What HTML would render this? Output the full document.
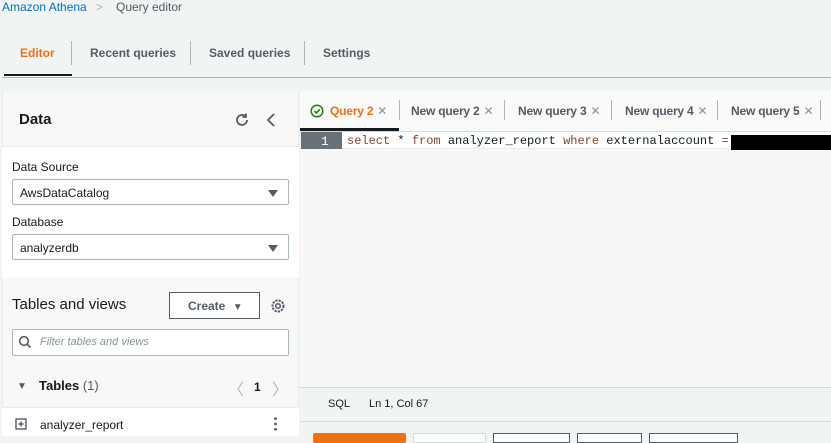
<!DOCTYPE html>
<html><head><style>
*{box-sizing:border-box;margin:0;padding:0}
body{width:831px;height:436px;overflow:hidden;background:#f2f3f3;font-family:"Liberation Sans",sans-serif;position:relative;color:#16191f}
.a{position:absolute}
.t{font-size:12px;font-weight:bold;color:#545b64}
.sel{background:#fff;border:1px solid #aab7b8;border-radius:2px;height:26px;font-size:12px;padding:6px 7px;color:#16191f}
.caret{position:absolute;right:10px;top:10px;width:0;height:0;border-left:5px solid transparent;border-right:5px solid transparent;border-top:7px solid #545b64}
.qt{position:absolute;top:104px;font-size:12px;font-weight:bold;color:#545b64;letter-spacing:-0.2px}
.x{color:#879596;font-weight:normal;margin-left:4px}
.sep{position:absolute;top:100px;width:1px;height:20px;background:#aab7b8}
.mono{font-family:"Liberation Mono",monospace;font-size:12px}
</style></head><body>
<div class="a" style="left:2px;top:0;font-size:12px;color:#0073bb">Amazon Athena</div>
<div class="a" style="left:96px;top:0;font-size:12px;color:#aab7b8">&gt;</div>
<div class="a" style="left:116px;top:0;font-size:12px;color:#545b64">Query editor</div>

<div class="a t" style="left:20px;top:46px;color:#ec7211">Editor</div>
<div class="a" style="left:71px;top:41px;width:1px;height:24px;background:#aab7b8"></div>
<div class="a t" style="left:90px;top:46px">Recent queries</div>
<div class="a" style="left:190px;top:41px;width:1px;height:24px;background:#aab7b8"></div>
<div class="a t" style="left:209px;top:46px">Saved queries</div>
<div class="a" style="left:304px;top:41px;width:1px;height:24px;background:#aab7b8"></div>
<div class="a t" style="left:323px;top:46px">Settings</div>
<div class="a" style="left:4px;top:74px;width:68px;height:2px;background:#16191f"></div>
<div class="a" style="left:2px;top:77px;width:829px;height:1px;background:#aab7b8"></div>

<!-- left panel -->
<div class="a" style="left:2px;top:91px;width:297px;height:345px;background:#f8f8f8;border:1px solid #eaeded;border-top:none"></div>
<div class="a" style="left:19px;top:111px;font-size:15px;font-weight:bold">Data</div>
<svg class="a" style="left:233px;top:111px" width="18" height="18" viewBox="0 0 18 18"><path d="M14 9a5 5 0 1 1-1.5-3.6M13 2.5v3.5h-3.5" fill="none" stroke="#545b64" stroke-width="1.8"/></svg>
<svg class="a" style="left:264px;top:111px" width="14" height="18" viewBox="0 0 14 18"><path d="M10 3l-6 6 6 6" fill="none" stroke="#545b64" stroke-width="1.8"/></svg>
<div class="a" style="left:2px;top:146px;width:297px;height:132px;background:#fff;border-top:1px solid #eaeded"></div>
<div class="a" style="left:12px;top:160px;font-size:12px">Data Source</div>
<div class="a sel" style="left:12px;top:179px;width:277px">AwsDataCatalog<span class="caret"></span></div>
<div class="a" style="left:12px;top:215px;font-size:12px">Database</div>
<div class="a sel" style="left:12px;top:234px;width:277px">analyzerdb<span class="caret"></span></div>

<div class="a" style="left:12px;top:296px;font-size:15px">Tables and views</div>
<div class="a" style="left:169px;top:292px;width:91px;height:27px;border:1px solid #545b64;background:#fff;font-size:12px;font-weight:bold;color:#545b64;padding:6px 0 0 18px">Create <span style="font-size:10px;margin-left:4px">▼</span></div>
<svg class="a" style="left:270px;top:298px" width="16" height="16" viewBox="0 0 16 16"><circle cx="8" cy="8" r="2.3" fill="none" stroke="#545b64" stroke-width="1.5"/><circle cx="8" cy="8" r="5.5" fill="none" stroke="#545b64" stroke-width="2" stroke-dasharray="2.2 1.1"/></svg>
<div class="a" style="left:12px;top:329px;width:277px;height:27px;border:1px solid #aab7b8;background:#fff;border-radius:2px"></div>
<svg class="a" style="left:18px;top:335px" width="14" height="14" viewBox="0 0 14 14"><circle cx="6" cy="6" r="4.3" fill="none" stroke="#545b64" stroke-width="1.6"/><path d="M9 9l3.5 3.5" stroke="#545b64" stroke-width="1.6"/></svg>
<div class="a" style="left:40px;top:336px;font-size:11px;font-style:italic;color:#879596">Filter tables and views</div>
<div class="a" style="left:17px;top:381px;font-size:10px;color:#545b64">▼</div>
<div class="a" style="left:39px;top:378px;font-size:13px;font-weight:bold">Tables <span style="font-weight:normal;color:#545b64">(1)</span></div>
<div class="a" style="left:228px;top:376px;font-size:16px;color:#aab7b8">〈</div>
<div class="a" style="left:254px;top:380px;font-size:12px;font-weight:bold">1</div>
<div class="a" style="left:272px;top:376px;font-size:16px;color:#aab7b8">〉</div>
<div class="a" style="left:2px;top:407px;width:297px;height:29px;background:#fff;border-top:1px solid #eaeded"></div>
<svg class="a" style="left:15px;top:418px" width="12" height="12" viewBox="0 0 12 12"><rect x="1" y="1" width="10" height="10" fill="none" stroke="#545b64" stroke-width="1.4"/><path d="M6 3.5v5M3.5 6h5" stroke="#545b64" stroke-width="1.4"/></svg>
<div class="a" style="left:40px;top:418px;font-size:12px">analyzer_report</div>
<div class="a" style="left:274px;top:416px;width:3px;height:16px;background:radial-gradient(circle,#545b64 1.3px,transparent 1.5px) 0 0/3px 5.3px"></div>

<!-- editor -->
<div class="a" style="left:300px;top:91px;width:531px;height:40px;background:#fafafa"></div>
<svg class="a" style="left:310px;top:104px" width="14" height="14" viewBox="0 0 14 14"><circle cx="7" cy="7" r="5.8" fill="none" stroke="#1d8102" stroke-width="1.5"/><path d="M4.3 7l2 2 3.5-3.7" fill="none" stroke="#1d8102" stroke-width="1.5"/></svg>
<div class="qt" style="left:330px;color:#ec7211">Query 2<span class="x">✕</span></div>
<div class="sep" style="left:399px"></div>
<div class="qt" style="left:411px">New query 2<span class="x">✕</span></div>
<div class="sep" style="left:504px"></div>
<div class="qt" style="left:518px">New query 3<span class="x">✕</span></div>
<div class="sep" style="left:611px"></div>
<div class="qt" style="left:625px">New query 4<span class="x">✕</span></div>
<div class="sep" style="left:717px"></div>
<div class="qt" style="left:731px">New query 5<span class="x">✕</span></div>
<div class="sep" style="left:820px"></div>
<div class="a" style="left:300px;top:128px;width:99px;height:3px;background:#16191f"></div>
<div class="a" style="left:300px;top:131px;width:531px;height:256px;background:#f7f7f7;border-top:1px solid #d5dbdb"></div>
<div class="a" style="left:301px;top:132px;width:41px;height:17px;background:#687078"></div>
<div class="a mono" style="left:321px;top:134px;color:#fff;font-size:13px">1</div>
<div class="a" style="left:342px;top:132px;width:489px;height:17px;background:#fff;border-bottom:1px solid #eaeded"></div>
<div class="a mono" style="left:347px;top:134px;color:#16191f;white-space:pre"><span style="color:#7d4a2d">select</span> * <span style="color:#7d4a2d">from</span> analyzer_report <span style="color:#7d4a2d">where</span> externalaccount <span style="color:#7d4a2d">=</span></div>
<div class="a" style="left:731px;top:135px;width:100px;height:15px;background:#000"></div>
<div class="a" style="left:300px;top:387px;width:531px;height:35px;background:#f2f3f3;border-top:1px solid #d5dbdb;border-bottom:1px solid #d5dbdb"></div>
<div class="a" style="left:328px;top:398px;font-size:11px">SQL</div>
<div class="a" style="left:369px;top:398px;font-size:11px">Ln 1, Col 67</div>

<div class="a" style="left:313px;top:433px;width:93px;height:10px;background:#ec7211;border-radius:2px"></div>
<div class="a" style="left:413px;top:433px;width:73px;height:10px;border:1px solid #d5dbdb;background:#fff"></div>
<div class="a" style="left:493px;top:433px;width:77px;height:10px;border:1px solid #545b64;background:#fff"></div>
<div class="a" style="left:577px;top:433px;width:65px;height:10px;border:1px solid #545b64;background:#fff"></div>
<div class="a" style="left:649px;top:433px;width:89px;height:10px;border:1px solid #545b64;background:#fff"></div>
</body></html>
